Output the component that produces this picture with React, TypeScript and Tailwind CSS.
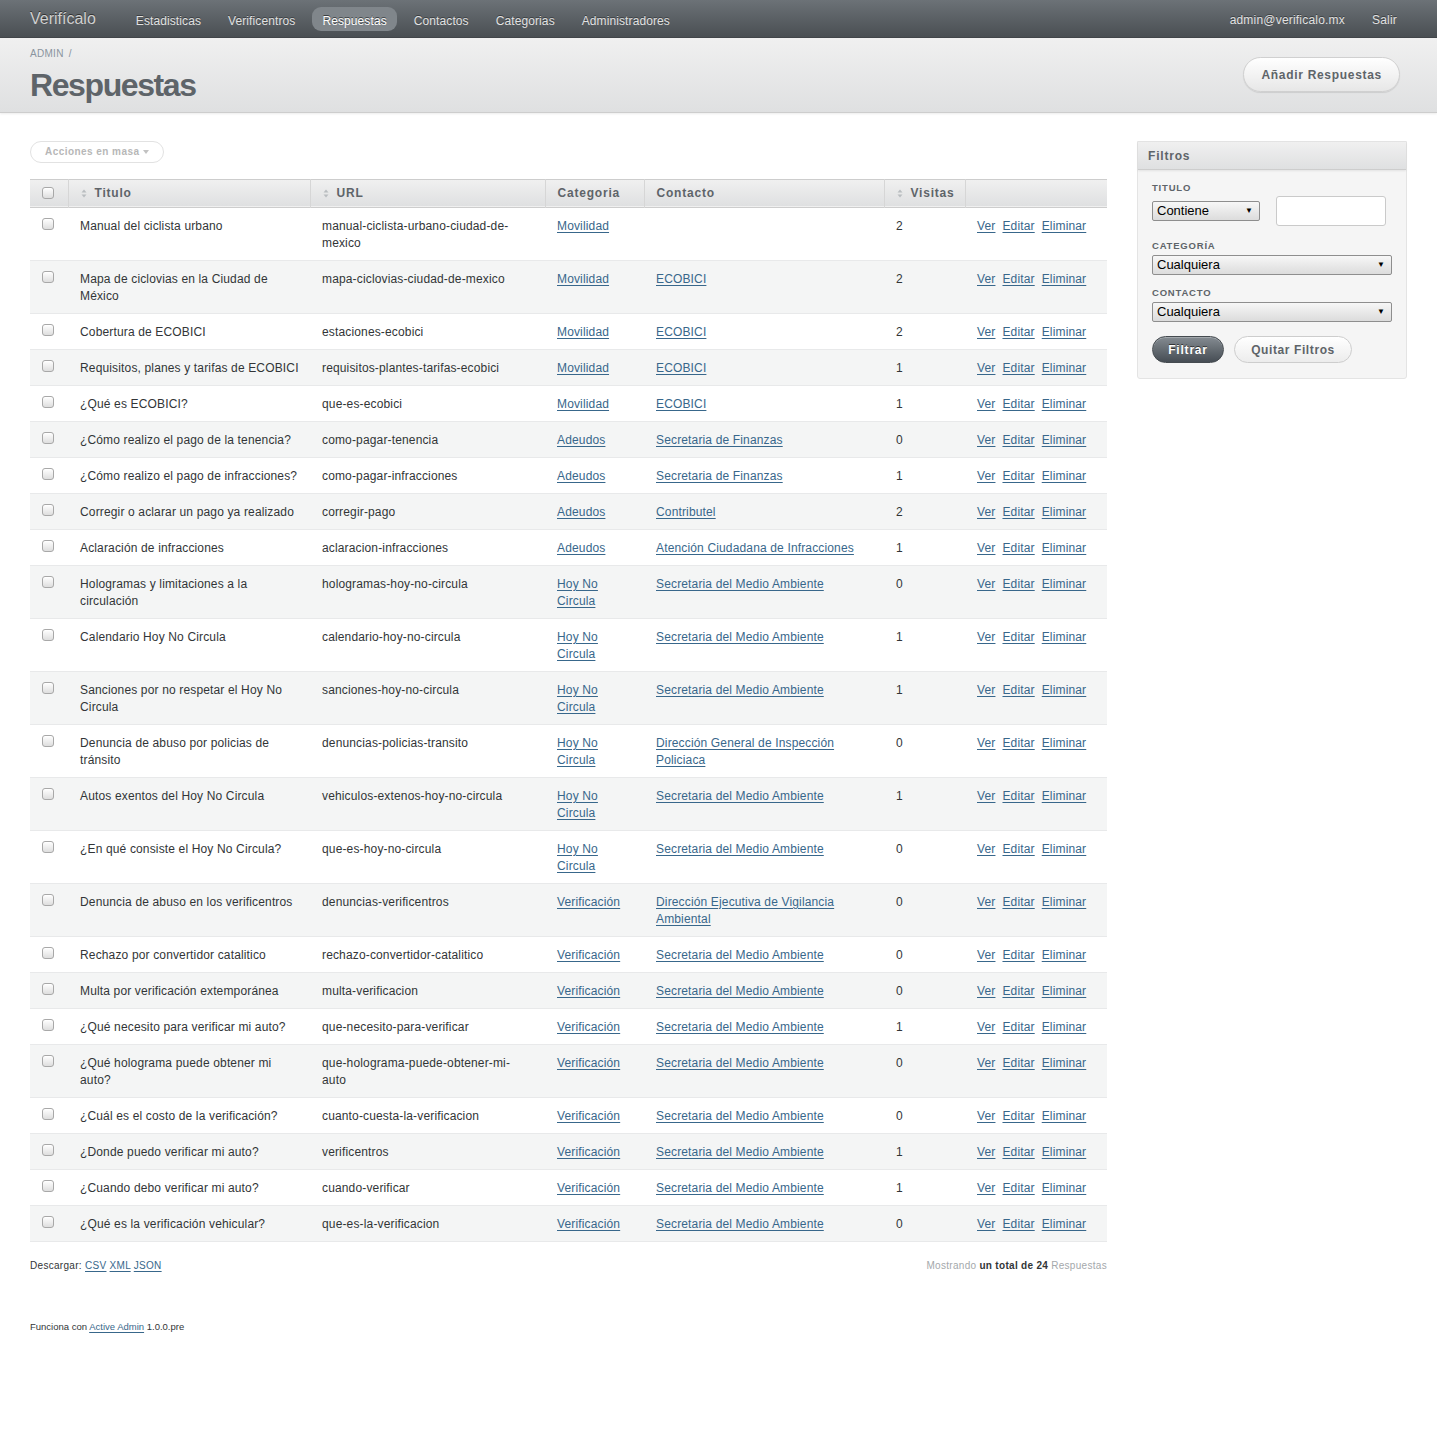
import React from 'react';

type Row = {
  titulo: string;
  url: string;
  categoria: string;
  contacto: string;
  visitas: number;
};

const SMA = 'Secretaria del Medio Ambiente';

const rows: Row[] = [
  { titulo: 'Manual del ciclista urbano', url: 'manual-ciclista-urbano-ciudad-de-mexico', categoria: 'Movilidad', contacto: '', visitas: 2 },
  { titulo: 'Mapa de ciclovias en la Ciudad de México', url: 'mapa-ciclovias-ciudad-de-mexico', categoria: 'Movilidad', contacto: 'ECOBICI', visitas: 2 },
  { titulo: 'Cobertura de ECOBICI', url: 'estaciones-ecobici', categoria: 'Movilidad', contacto: 'ECOBICI', visitas: 2 },
  { titulo: 'Requisitos, planes y tarifas de ECOBICI', url: 'requisitos-plantes-tarifas-ecobici', categoria: 'Movilidad', contacto: 'ECOBICI', visitas: 1 },
  { titulo: '¿Qué es ECOBICI?', url: 'que-es-ecobici', categoria: 'Movilidad', contacto: 'ECOBICI', visitas: 1 },
  { titulo: '¿Cómo realizo el pago de la tenencia?', url: 'como-pagar-tenencia', categoria: 'Adeudos', contacto: 'Secretaria de Finanzas', visitas: 0 },
  { titulo: '¿Cómo realizo el pago de infracciones?', url: 'como-pagar-infracciones', categoria: 'Adeudos', contacto: 'Secretaria de Finanzas', visitas: 1 },
  { titulo: 'Corregir o aclarar un pago ya realizado', url: 'corregir-pago', categoria: 'Adeudos', contacto: 'Contributel', visitas: 2 },
  { titulo: 'Aclaración de infracciones', url: 'aclaracion-infracciones', categoria: 'Adeudos', contacto: 'Atención Ciudadana de Infracciones', visitas: 1 },
  { titulo: 'Hologramas y limitaciones a la circulación', url: 'hologramas-hoy-no-circula', categoria: 'Hoy No Circula', contacto: SMA, visitas: 0 },
  { titulo: 'Calendario Hoy No Circula', url: 'calendario-hoy-no-circula', categoria: 'Hoy No Circula', contacto: SMA, visitas: 1 },
  { titulo: 'Sanciones por no respetar el Hoy No Circula', url: 'sanciones-hoy-no-circula', categoria: 'Hoy No Circula', contacto: SMA, visitas: 1 },
  { titulo: 'Denuncia de abuso por policias de tránsito', url: 'denuncias-policias-transito', categoria: 'Hoy No Circula', contacto: 'Dirección General de Inspección Policiaca', visitas: 0 },
  { titulo: 'Autos exentos del Hoy No Circula', url: 'vehiculos-extenos-hoy-no-circula', categoria: 'Hoy No Circula', contacto: SMA, visitas: 1 },
  { titulo: '¿En qué consiste el Hoy No Circula?', url: 'que-es-hoy-no-circula', categoria: 'Hoy No Circula', contacto: SMA, visitas: 0 },
  { titulo: 'Denuncia de abuso en los verificentros', url: 'denuncias-verificentros', categoria: 'Verificación', contacto: 'Dirección Ejecutiva de Vigilancia Ambiental', visitas: 0 },
  { titulo: 'Rechazo por convertidor catalitico', url: 'rechazo-convertidor-catalitico', categoria: 'Verificación', contacto: SMA, visitas: 0 },
  { titulo: 'Multa por verificación extemporánea', url: 'multa-verificacion', categoria: 'Verificación', contacto: SMA, visitas: 0 },
  { titulo: '¿Qué necesito para verificar mi auto?', url: 'que-necesito-para-verificar', categoria: 'Verificación', contacto: SMA, visitas: 1 },
  { titulo: '¿Qué holograma puede obtener mi auto?', url: 'que-holograma-puede-obtener-mi-auto', categoria: 'Verificación', contacto: SMA, visitas: 0 },
  { titulo: '¿Cuál es el costo de la verificación?', url: 'cuanto-cuesta-la-verificacion', categoria: 'Verificación', contacto: SMA, visitas: 0 },
  { titulo: '¿Donde puedo verificar mi auto?', url: 'verificentros', categoria: 'Verificación', contacto: SMA, visitas: 1 },
  { titulo: '¿Cuando debo verificar mi auto?', url: 'cuando-verificar', categoria: 'Verificación', contacto: SMA, visitas: 1 },
  { titulo: '¿Qué es la verificación vehicular?', url: 'que-es-la-verificacion', categoria: 'Verificación', contacto: SMA, visitas: 0 },
];

const navItems = ['Estadisticas', 'Verificentros', 'Respuestas', 'Contactos', 'Categorias', 'Administradores'];

const SortIcon = () => (
  <svg width="6" height="9" viewBox="0 0 6 9" className="mr-[8px] inline-block align-[-1px]">
    <path d="M3 0.5L5.5 3.5H0.5Z" fill="#b9bdc0" />
    <path d="M3 8.5L5.5 5.5H0.5Z" fill="#b9bdc0" />
  </svg>
);

const Checkbox = () => (
  <span className="block w-[12px] h-[12px] rounded-[3px] border border-[#a8a8a8] bg-linear-to-b from-white to-[#dedede] shadow-[inset_0_1px_0_#fff]" />
);

const Link = ({ children }: { children: React.ReactNode }) => (
  <a href="#" className="text-[#38678b] underline underline-offset-[2px]">
    {children}
  </a>
);

const Select = ({ label, width }: { label: string; width: string }) => (
  <div
    className={`${width} h-[20px] flex items-center justify-between pl-[4px] pr-[6px] border border-[#8e8e8e] rounded-[2px] bg-linear-to-b from-[#f7f7f7] to-[#dcdcdc] text-[13px] text-black`}
  >
    <span>{label}</span>
    <span className="text-[8px] leading-none">▼</span>
  </div>
);

const App = () => {
  return (
    <div className="min-h-[1430px] bg-white font-['Liberation_Sans',Arial,sans-serif] text-[#323537]">
      {/* header */}
      <div className="flex items-center h-[38px] px-[30px] bg-linear-to-b from-[#6c7277] to-[#4a4f53] border-b border-[#42464a]">
        <span className="text-[16px] text-[#d0d0d0] mr-[30px] pt-[1px] [text-shadow:0_-1px_0_#333]">Verifícalo</span>
        <div className="flex items-center gap-[7px]">
          {navItems.map((item) => (
            <a
              key={item}
              href="#"
              className={`px-[10px] h-[24px] pt-[2px] leading-[24px] rounded-[9px] text-[12px] tracking-[0.1px] [text-shadow:0_-1px_0_#3b3f42] ${
                item === 'Respuestas' ? 'bg-[#80868b] text-white' : 'text-[#e2e2e2]'
              }`}
            >
              {item}
            </a>
          ))}
        </div>
        <div className="ml-auto flex items-center gap-[7px] pt-[2px]">
          <span className="px-[10px] text-[12px] tracking-[0.2px] text-[#e2e2e2] [text-shadow:0_-1px_0_#3b3f42]">admin@verificalo.mx</span>
          <a href="#" className="px-[10px] text-[12px] tracking-[0.2px] text-[#e2e2e2] [text-shadow:0_-1px_0_#3b3f42]">
            Salir
          </a>
        </div>
      </div>

      {/* title bar */}
      <div className="flex items-center justify-between px-[30px] pt-[8px] pb-[9px] bg-linear-to-b from-[#f0f0f0] to-[#dfe0e1] border-b border-[#cdcdcd] shadow-[0_1px_2px_rgba(0,0,0,0.08)]">
        <div>
          <div className="pt-[1px] text-[10px] leading-[14px] text-[#8a949e] tracking-[0.3px]">
            ADMIN <span className="ml-[2px]">/</span>
          </div>
          <h2 className="mt-[6px] text-[32px] leading-[36px] font-bold tracking-[-1.4px] text-[#5e6469]">Respuestas</h2>
        </div>
        <a
          href="#"
          className="mr-[7px] h-[35px] px-[17px] flex items-center rounded-full border border-[#d0d0d0] bg-linear-to-b from-white to-[#e7e7e7] shadow-[0_1px_1px_rgba(0,0,0,0.1)] text-[12px] font-bold tracking-[0.7px] text-[#5e6469]"
        >
          Añadir Respuestas
        </a>
      </div>

      {/* main */}
      <div className="flex px-[30px] pt-[25px]">
        <div className="flex-1">
          <div className="inline-flex items-center h-[22px] px-[14px] rounded-full border border-[#e2e2e2] text-[10px] font-bold tracking-[0.45px] text-[#b7b7b7]">
            Acciones en masa
            <svg width="6" height="4" viewBox="0 0 6 4" className="ml-[4px]">
              <path d="M0 0H6L3 4Z" fill="#c2c2c2" />
            </svg>
          </div>

          <table className="mt-[16px] w-full table-fixed border-collapse text-[12px]">
            <colgroup>
              <col className="w-[38px]" />
              <col className="w-[242px]" />
              <col className="w-[235px]" />
              <col className="w-[99px]" />
              <col className="w-[240px]" />
              <col className="w-[81px]" />
              <col className="w-[142px]" />
            </colgroup>
            <thead>
              <tr className="h-[28px] bg-linear-to-b from-[#f0f0f0] to-[#dfe0e1] border-y border-[#cdcdcd] text-left font-bold tracking-[0.8px] text-[#5e6469] whitespace-nowrap">
                <th className="px-[12px] border-r border-[#d6d6d6]">
                  <Checkbox />
                </th>
                <th className="px-[12px] border-r border-[#d6d6d6]">
                  <SortIcon />
                  Titulo
                </th>
                <th className="px-[12px] border-r border-[#d6d6d6]">
                  <SortIcon />
                  URL
                </th>
                <th className="px-[12px] border-r border-[#d6d6d6]">Categoria</th>
                <th className="px-[12px] border-r border-[#d6d6d6]">Contacto</th>
                <th className="pl-[12px] pr-0 border-r border-[#d6d6d6]">
                  <SortIcon />
                  Visitas
                </th>
                <th className="px-[12px]"></th>
              </tr>
            </thead>
            <tbody>
              {rows.map((r, i) => (
                <tr
                  key={r.url}
                  className={`align-top leading-[17px] tracking-[0.15px] border-b border-[#e8e9ea] ${
                    i % 2 === 1 ? 'bg-[#f4f5f5]' : 'bg-white'
                  }`}
                >
                  <td className="pl-[12px] pt-[10px] pb-[8px]">
                    <Checkbox />
                  </td>
                  <td className="pl-[12px] pr-[8px] pt-[10px] pb-[8px]">{r.titulo}</td>
                  <td className="px-[12px] pt-[10px] pb-[8px]">{r.url}</td>
                  <td className="px-[12px] pt-[10px] pb-[8px]">
                    <Link>{r.categoria}</Link>
                  </td>
                  <td className="px-[12px] pt-[10px] pb-[8px]">{r.contacto && <Link>{r.contacto}</Link>}</td>
                  <td className="px-[12px] pt-[10px] pb-[8px]">{r.visitas}</td>
                  <td className="px-[12px] pt-[10px] pb-[8px]">
                    <div className="flex gap-[7px]">
                      <Link>Ver</Link>
                      <Link>Editar</Link>
                      <Link>Eliminar</Link>
                    </div>
                  </td>
                </tr>
              ))}
            </tbody>
          </table>

          <div className="mt-[17px] flex items-center justify-between text-[10px] leading-[14px] tracking-[0.3px]">
            <div>
              Descargar: <Link>CSV</Link> <Link>XML</Link> <Link>JSON</Link>
            </div>
            <div className="text-[#a4a8ab]">
              Mostrando <b className="text-[#323537]">un total de 24</b> Respuestas
            </div>
          </div>

          <div className="mt-[47px] text-[9.5px] leading-[14px]">
            Funciona con <Link>Active Admin</Link> 1.0.0.pre
          </div>
        </div>

        {/* sidebar */}
        <div className="w-[270px] ml-[30px] mt-[3px] self-start">
          <div className="border border-[#e4e4e4] rounded-b-[3px] bg-[#f5f5f5]">
            <div className="h-[28px] px-[10px] flex items-center bg-linear-to-b from-[#f0f0f0] to-[#dfe0e1] border-b border-[#cdcdcd] shadow-[0_1px_2px_rgba(0,0,0,0.08)] text-[12px] font-bold tracking-[0.8px] text-[#5e6469]">
              Filtros
            </div>
            <div className="px-[14px] pt-[12px] pb-[15px]">
              <div className="text-[9.5px] leading-[12px] font-bold tracking-[0.8px] text-[#5e6469]">TITULO</div>
              <div className="mt-[2px] flex items-center gap-[16px]">
                <Select label="Contiene" width="w-[108px]" />
                <div className="w-[110px] h-[30px] bg-white border border-[#cacaca] rounded-[3px]" />
              </div>

              <div className="mt-[14px] text-[9.5px] leading-[12px] font-bold tracking-[0.8px] text-[#5e6469]">CATEGORÍA</div>
              <div className="mt-[3px]">
                <Select label="Cualquiera" width="w-[240px]" />
              </div>

              <div className="mt-[12px] text-[9.5px] leading-[12px] font-bold tracking-[0.8px] text-[#5e6469]">CONTACTO</div>
              <div className="mt-[3px]">
                <Select label="Cualquiera" width="w-[240px]" />
              </div>

              <div className="mt-[14px] flex items-center gap-[10px]">
                <a
                  href="#"
                  className="w-[72px] h-[27px] flex items-center justify-center rounded-full border border-[#454b50] bg-linear-to-b from-[#858c92] to-[#464d54] shadow-[inset_0_1px_0_rgba(255,255,255,0.25)] text-[12px] font-bold tracking-[0.8px] text-white [text-shadow:0_-1px_0_#333]"
                >
                  Filtrar
                </a>
                <a
                  href="#"
                  className="w-[118px] h-[27px] flex items-center justify-center rounded-full border border-[#cdcdcd] bg-linear-to-b from-white to-[#ececec] text-[12px] font-bold tracking-[0.6px] text-[#5e6469]"
                >
                  Quitar Filtros
                </a>
              </div>
            </div>
          </div>
        </div>
      </div>
    </div>
  );
};

export default App;
